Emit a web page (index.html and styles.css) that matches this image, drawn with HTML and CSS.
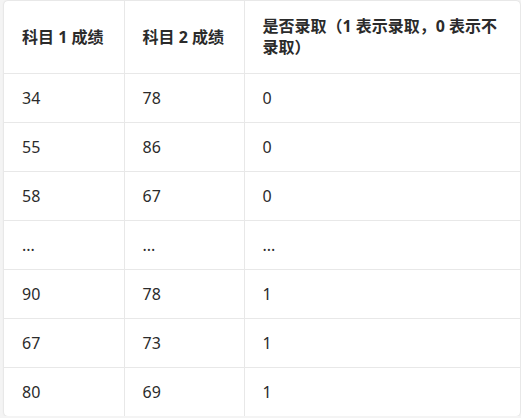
FILE: index.html
```html
<!DOCTYPE html>
<html lang="zh">
<head>
<meta charset="utf-8">
<link rel="stylesheet" href="styles.css">
</head>
<body>
<div class="card">
  <table class="grid">
    <colgroup>
      <col class="c1"><col class="c2"><col class="c3">
    </colgroup>
    <thead>
      <tr><th>科目 1 成绩</th><th>科目 2 成绩</th><th>是否录取（1 表示录取，0 表示不录取）</th></tr>
    </thead>
    <tbody>
      <tr><td>34</td><td>78</td><td>0</td></tr>
      <tr><td>55</td><td>86</td><td>0</td></tr>
      <tr><td>58</td><td>67</td><td>0</td></tr>
      <tr><td>...</td><td>...</td><td>...</td></tr>
      <tr><td>90</td><td>78</td><td>1</td></tr>
      <tr><td>67</td><td>73</td><td>1</td></tr>
      <tr><td>80</td><td>69</td><td>1</td></tr>
    </tbody>
  </table>
</div>
</body>
</html>
```

FILE: styles.css
```css
html, body {
  margin: 0;
  padding: 0;
  background: #f4f4f4;
}
body {
  padding: 1px 0 0 4px;
  font-family: "Noto Sans", "Noto Sans CJK SC", sans-serif;
  color: #2b2b2b;
}
.card {
  width: 516px;
  background: #fff;
  border-radius: 4px;
  box-shadow: 0 0 2px rgba(0,0,0,0.18);
  overflow: hidden;
}
.grid {
  width: 516px;
  border-collapse: collapse;
  table-layout: fixed;
}
.c1, .c2 { width: 120px; }
.c3 { width: 276px; }
th, td {
  text-align: left;
  vertical-align: middle;
  border-right: 1px solid #e8e8e8;
  border-bottom: 1px solid #e8e8e8;
  padding: 14px 18px;
  line-height: 20px;
}
th:last-child, td:last-child { border-right: none; }
tbody tr:last-child td { border-bottom: none; }
th {
  font-size: 16px;
  font-weight: 700;
  padding: 15px 18px;
  line-height: 21px;
  height: 42px;
}
td {
  font-size: 16px;
  font-weight: 400;
  height: 20px;
}
```
